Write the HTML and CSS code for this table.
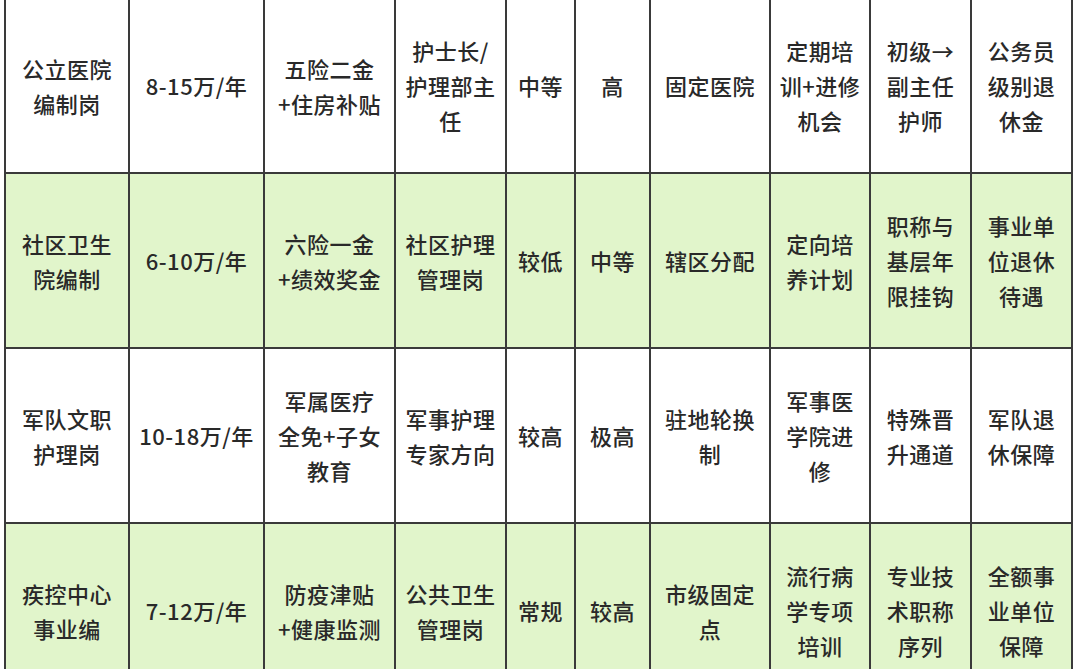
FILE: index.html
```html
<!DOCTYPE html>
<html lang="zh-CN">
<head>
<meta charset="utf-8">
<title>护理岗位对比</title>
<link rel="stylesheet" href="styles.css">
</head>
<body>
<div class="grid">
  <div class="cell">公立医院<br>编制岗</div>
  <div class="cell">8-15万/年</div>
  <div class="cell">五险二金<br>+住房补贴</div>
  <div class="cell">护士长/<br>护理部主<br>任</div>
  <div class="cell">中等</div>
  <div class="cell">高</div>
  <div class="cell">固定医院</div>
  <div class="cell">定期培<br>训+进修<br>机会</div>
  <div class="cell">初级→<br>副主任<br>护师</div>
  <div class="cell">公务员<br>级别退<br>休金</div>

  <div class="cell green">社区卫生<br>院编制</div>
  <div class="cell green">6-10万/年</div>
  <div class="cell green">六险一金<br>+绩效奖金</div>
  <div class="cell green">社区护理<br>管理岗</div>
  <div class="cell green">较低</div>
  <div class="cell green">中等</div>
  <div class="cell green">辖区分配</div>
  <div class="cell green">定向培<br>养计划</div>
  <div class="cell green">职称与<br>基层年<br>限挂钩</div>
  <div class="cell green">事业单<br>位退休<br>待遇</div>

  <div class="cell">军队文职<br>护理岗</div>
  <div class="cell">10-18万/年</div>
  <div class="cell">军属医疗<br>全免+子女<br>教育</div>
  <div class="cell">军事护理<br>专家方向</div>
  <div class="cell">较高</div>
  <div class="cell">极高</div>
  <div class="cell">驻地轮换<br>制</div>
  <div class="cell">军事医<br>学院进<br>修</div>
  <div class="cell">特殊晋<br>升通道</div>
  <div class="cell">军队退<br>休保障</div>

  <div class="cell green">疾控中心<br>事业编</div>
  <div class="cell green">7-12万/年</div>
  <div class="cell green">防疫津贴<br>+健康监测</div>
  <div class="cell green">公共卫生<br>管理岗</div>
  <div class="cell green">常规</div>
  <div class="cell green">较高</div>
  <div class="cell green">市级固定<br>点</div>
  <div class="cell green">流行病<br>学专项<br>培训</div>
  <div class="cell green">专业技<br>术职称<br>序列</div>
  <div class="cell green">全额事<br>业单位<br>保障</div>
</div>
</body>
</html>
```

FILE: styles.css
```css
html, body {
  margin: 0;
  padding: 0;
  background: #ffffff;
  overflow: hidden;
}

body {
  width: 1080px;
  height: 669px;
  font-family: "Noto Sans CJK SC", "Noto Sans", sans-serif;
  color: #292929;
}

.grid {
  display: grid;
  grid-template-columns: 124px 135px 131px 111px 69px 75px 120px 100px 101px 101px;
  grid-auto-rows: 175px;
  margin: -3px 0 0 4px;
  width: max-content;
  border-left: 2px solid #3a3a3a;
  border-top: 2px solid #3a3a3a;
}

.cell {
  display: flex;
  align-items: center;
  justify-content: center;
  text-align: center;
  box-sizing: border-box;
  border-right: 2px solid #3a3a3a;
  border-bottom: 2px solid #3a3a3a;
  font-size: 22px;
  font-weight: 500;
  letter-spacing: 0.5px;
  line-height: 35px;
  background: #ffffff;
}

.cell.green {
  background: #e1f5cb;
}
```
